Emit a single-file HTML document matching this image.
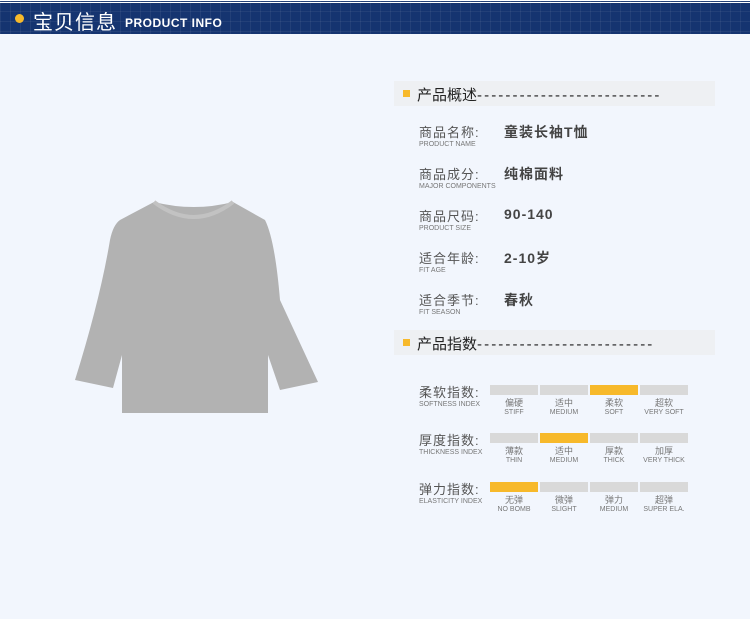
<!DOCTYPE html>
<html><head><meta charset="utf-8"><style>
*{margin:0;padding:0;box-sizing:border-box}
body{width:750px;height:619px;background:#f2f6fd;font-family:"Liberation Sans","Noto Sans CJK SC",sans-serif;position:relative;overflow:hidden;color:#333}
.hd{position:absolute;left:0;top:0;width:750px;height:34px;border-top:1px solid #fff;
background-image:linear-gradient(rgba(255,255,255,.06) 1px,transparent 1px),linear-gradient(90deg,rgba(255,255,255,.06) 1px,transparent 1px);background-size:10px 10px;background-color:#153470}
.hd .line{position:absolute;top:1px;left:0;width:750px;height:1px;background:#fff}
.dot{position:absolute;left:15px;top:13px;width:9px;height:9px;border-radius:50%;background:#f7b92b}
.ht{position:absolute;left:33px;top:5px;color:#fff;font-size:20px;letter-spacing:1px}
.he{position:absolute;left:125px;top:15px;color:#fff;font-size:12px;font-weight:bold;letter-spacing:.5px}
.sec{position:absolute;left:394px;width:321px;height:25px;background:#eef0f3}
.sec i{position:absolute;left:9px;top:9px;width:7px;height:7px;background:#f7b92b}
.sec span{position:absolute;left:23px;top:3px;font-size:15px;color:#222;white-space:nowrap}
.sec b{font-weight:normal;letter-spacing:2.1px}
.lab{position:absolute;left:419px;font-size:13px;color:#555;letter-spacing:1px}
.lab small{display:block;font-size:7px;color:#777;letter-spacing:0;margin-top:0}
.val{position:absolute;left:504px;font-size:14px;font-weight:bold;color:#444;letter-spacing:1px}
.bar{position:absolute;height:10px;width:48px;background:#d9d9d9}
.y{background:#f7b92b}
.cap{position:absolute;width:60px;text-align:center;font-size:9px;color:#777;line-height:10px}
.cap small{display:block;font-size:7px}
</style></head><body>
<div class="hd"><div class="line"></div><div class="dot"></div><div class="ht">宝贝信息</div><div class="he">PRODUCT INFO</div></div>

<svg style="position:absolute;left:0;top:0" width="750" height="619">
<path d="M154 202 Q194 212 233 202 L265 220 Q275 240 280 300 L318 382 L280 390 L268 355 L268 413 L122 413 L122 355 L113 388 L75 380 Q100 300 110 240 Q113 225 120 220 Z" fill="#b2b2b2"/>
<path d="M154 202 Q194 232 233 202" fill="none" stroke="#c2c2c2" stroke-width="4"/>
</svg>

<div class="sec" style="top:81px"><i></i><span>产品概述<b>--------------------------</b></span></div>
<div class="lab" style="top:122px">商品名称:<small>PRODUCT NAME</small></div><div class="val" style="top:122px">童装长袖T恤</div>
<div class="lab" style="top:164px">商品成分:<small>MAJOR COMPONENTS</small></div><div class="val" style="top:164px">纯棉面料</div>
<div class="lab" style="top:206px">商品尺码:<small>PRODUCT SIZE</small></div><div class="val" style="top:206px">90-140</div>
<div class="lab" style="top:248px">适合年龄:<small>FIT AGE</small></div><div class="val" style="top:248px">2-10岁</div>
<div class="lab" style="top:290px">适合季节:<small>FIT SEASON</small></div><div class="val" style="top:290px">春秋</div>

<div class="sec" style="top:330px"><i></i><span>产品指数<b>-------------------------</b></span></div>

<div class="lab" style="top:382px">柔软指数:<small>SOFTNESS INDEX</small></div>
<div class="bar" style="left:490px;top:385px"></div><div class="bar" style="left:540px;top:385px"></div><div class="bar y" style="left:590px;top:385px"></div><div class="bar" style="left:640px;top:385px"></div>
<div class="cap" style="left:484px;top:398px">偏硬<small>STIFF</small></div><div class="cap" style="left:534px;top:398px">适中<small>MEDIUM</small></div><div class="cap" style="left:584px;top:398px">柔软<small>SOFT</small></div><div class="cap" style="left:634px;top:398px">超软<small>VERY SOFT</small></div>

<div class="lab" style="top:430px">厚度指数:<small>THICKNESS INDEX</small></div>
<div class="bar" style="left:490px;top:433px"></div><div class="bar y" style="left:540px;top:433px"></div><div class="bar" style="left:590px;top:433px"></div><div class="bar" style="left:640px;top:433px"></div>
<div class="cap" style="left:484px;top:446px">薄款<small>THIN</small></div><div class="cap" style="left:534px;top:446px">适中<small>MEDIUM</small></div><div class="cap" style="left:584px;top:446px">厚款<small>THICK</small></div><div class="cap" style="left:634px;top:446px">加厚<small>VERY THICK</small></div>

<div class="lab" style="top:479px">弹力指数:<small>ELASTICITY INDEX</small></div>
<div class="bar y" style="left:490px;top:482px"></div><div class="bar" style="left:540px;top:482px"></div><div class="bar" style="left:590px;top:482px"></div><div class="bar" style="left:640px;top:482px"></div>
<div class="cap" style="left:484px;top:495px">无弹<small>NO BOMB</small></div><div class="cap" style="left:534px;top:495px">微弹<small>SLIGHT</small></div><div class="cap" style="left:584px;top:495px">弹力<small>MEDIUM</small></div><div class="cap" style="left:634px;top:495px">超弹<small>SUPER ELA.</small></div>
</body></html>
